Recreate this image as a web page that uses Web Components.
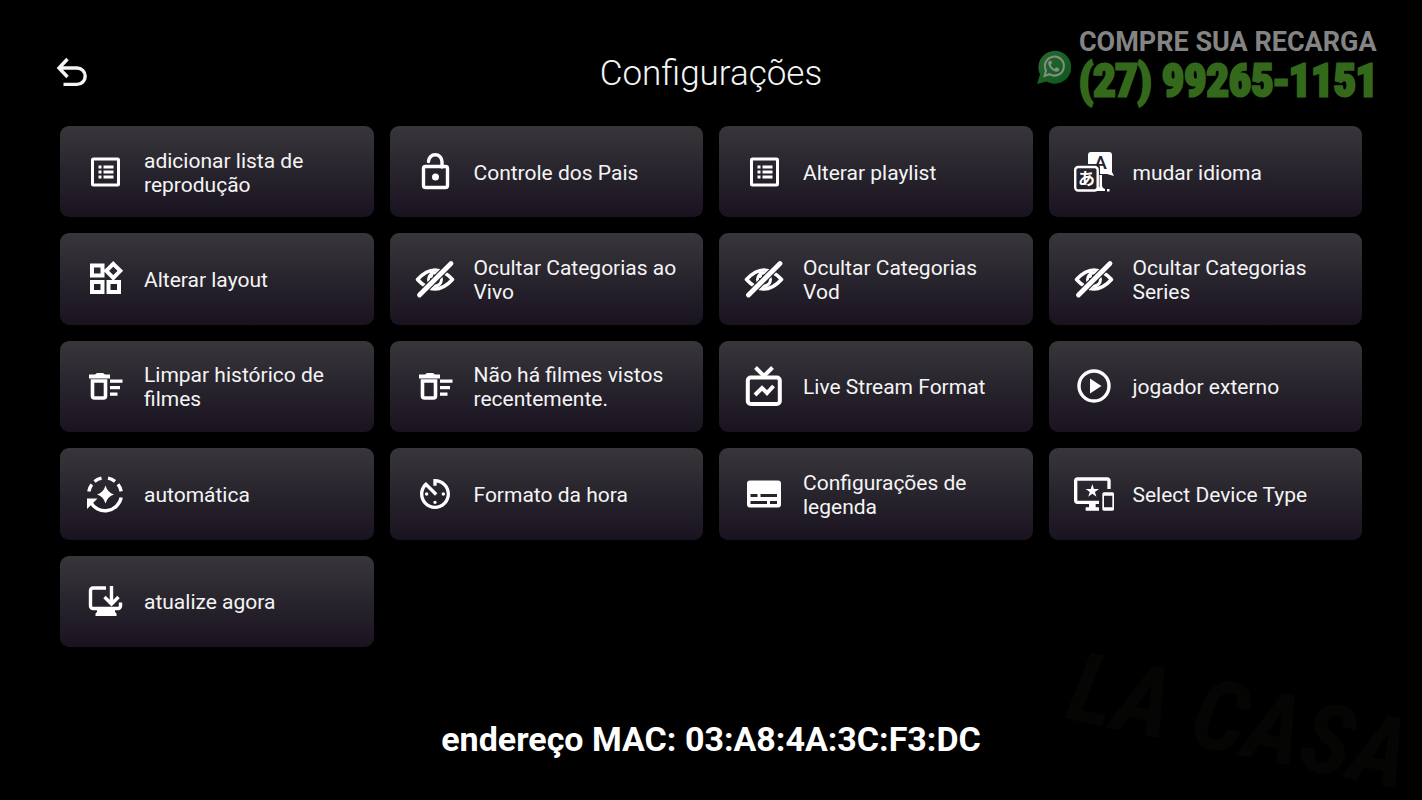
<!DOCTYPE html>
<html lang="pt-BR">
<head>
<meta charset="utf-8">
<meta name="viewport" content="width=device-width, initial-scale=1">
<title>Configurações</title>
<style>
    body {
        margin: 0;
        background: #000;
        color: #f4f4f5;
        font-family: Roboto, "Liberation Sans", sans-serif;
    }
</style>
</head>
<body>

<settings-screen>
    <back-button slot="header"></back-button>
    <span slot="title">Configurações</span>
    <recharge-banner slot="banner" phone="(27) 99265-1151">COMPRE SUA RECARGA</recharge-banner>

    <settings-tile icon="list">adicionar lista de reprodução</settings-tile>
    <settings-tile icon="lock">Controle dos Pais</settings-tile>
    <settings-tile icon="list">Alterar playlist</settings-tile>
    <settings-tile icon="translate">mudar idioma</settings-tile>
    <settings-tile icon="layout">Alterar layout</settings-tile>
    <settings-tile icon="hide">Ocultar Categorias ao Vivo</settings-tile>
    <settings-tile icon="hide">Ocultar Categorias Vod</settings-tile>
    <settings-tile icon="hide">Ocultar Categorias Series</settings-tile>
    <settings-tile icon="clear">Limpar histórico de filmes</settings-tile>
    <settings-tile icon="clear">Não há filmes vistos recentemente.</settings-tile>
    <settings-tile icon="tv">Live Stream Format</settings-tile>
    <settings-tile icon="play">jogador externo</settings-tile>
    <settings-tile icon="auto">automática</settings-tile>
    <settings-tile icon="timer">Formato da hora</settings-tile>
    <settings-tile icon="subtitles">Configurações de legenda</settings-tile>
    <settings-tile icon="devices">Select Device Type</settings-tile>
    <settings-tile icon="update">atualize agora</settings-tile>

    <span slot="footer">endereço MAC: 03:A8:4A:3C:F3:DC</span>
</settings-screen>

<script>
(function(){
    function attach(el, html) {
        const template = document.createElement('template');
        template.innerHTML = html;
        const shadowRoot = el.attachShadow({mode: 'open'});
        shadowRoot.appendChild(template.content.cloneNode(true));
        return shadowRoot;
    }

    // All icons share a 40 x 40 box
    const icons = {
        list: `
            <rect x="7.5" y="7" width="26" height="26" rx="1" fill="none" stroke="currentColor" stroke-width="3"/>
            <path d="M13.5 13.5h3v3h-3zM18.5 13.5h10v3h-10zM13.5 18.5h3v3h-3zM18.5 18.5h10v3h-10zM13.5 23.5h3v3h-3zM18.5 23.5h10v3h-10z"/>`,
        lock: `
            <g fill="none" stroke="currentColor" stroke-width="3.4">
                <rect x="8.5" y="14.5" width="24" height="21" rx="2"/>
                <path d="M13.5 9.5a6.5 6.5 0 0 1 13.5 0V15" stroke-linecap="round"/>
            </g>
            <circle cx="20.5" cy="25" r="3.5"/>`,
        translate: `
            <path d="M17 0h18a3 3 0 0 1 3 3v17l2 4-7-2H26v-6a4 4 0 0 0-4-4h-8V3a3 3 0 0 1 3-3z"/>
            <text x="26.5" y="16.5" font-family="Roboto, sans-serif" font-weight="500" font-size="19" text-anchor="middle" fill="#25212b">A</text>
            <rect x="1.2" y="15" width="22.5" height="23.5" rx="3" fill="none" stroke="currentColor" stroke-width="2.4"/>
            <text x="12.5" y="33" font-family="'Noto Sans CJK JP', sans-serif" font-weight="700" font-size="17" text-anchor="middle">あ</text>
            <path d="M25.5 23H28v10q0 3 3 4v2H21v-2l4.5-2zM33 37h2.5v2.5H33z"/>`,
        layout: `
            <g fill="none" stroke="currentColor" stroke-width="4">
                <path d="M7 6.5h10.5v10H7zM7 23h10.5v10H7zM23.5 23H34v10H23.5zM28.3 4.8l7 7-7 7-7-7z"/>
            </g>`,
        hide: `
            <g fill="none" stroke="currentColor">
                <path d="M2.5 20.5Q20 1.5 37.5 20.5Q20 39.5 2.5 20.5z" stroke-width="3.6" stroke-linejoin="round"/>
                <circle cx="20" cy="20.5" r="6.5" stroke-width="3"/>
                <path d="M16.5 12v7" stroke-width="3"/>
                <path d="M2.5 34L34 2.5M6.5 38L38 6.5" stroke="#25212b" stroke-width="1.5"/>
                <path d="M4.5 36L36 4.5" stroke-width="4.8" stroke-linecap="round"/>
            </g>`,
        clear: `
            <path d="M4 8.5h6L12 7h6l2 1.5h5v4H4z"/>
            <path d="M7.5 15h13v15a2 2 0 0 1-2 2h-9a2 2 0 0 1-2-2z" fill="none" stroke="currentColor" stroke-width="3.6"/>
            <path d="M25 13.5h12.5v3.3H25zM25 20h10v3.3H25zM25 26.5h7.5v3.3H25z"/>`,
        tv: `
            <g fill="none" stroke="currentColor" stroke-width="4">
                <rect x="3.8" y="11.5" width="32" height="26.5" rx="3"/>
                <path d="M11.5 1.5L20 10l8.5-8.5"/>
                <path d="M11 29l7-7 5 5 6.5-7"/>
            </g>`,
        play: `
            <circle cx="20" cy="20" r="15" fill="none" stroke="currentColor" stroke-width="3.4"/>
            <path d="M16 12.5L27.5 20 16 27.5z"/>`,
        auto: `
            <g fill="none" stroke="currentColor" stroke-width="3.4">
                <path d="M3.8 17.5a16.5 16.5 0 0 1 3-7M9.5 7.5a16.5 16.5 0 0 1 7-3.3M23 4.1a16.5 16.5 0 0 1 7 3.2M33 10.3a16.5 16.5 0 0 1 3.2 7"/>
                <path d="M5.5 28a16.5 16.5 0 0 0 30.7-4.5"/>
            </g>
            <path d="M2 24.5h10.5L9 28l-3.5 3.5L2 35z"/>
            <path d="M20.5 11.5q2 7 8.5 9-6.500 2-8.5 9-2-7-8.500-9 6.500-2 8.500-9z"/>`,
        timer: `
            <path transform="scale(1.667)" d="M11 17c0 .55.45 1 1 1s1-.45 1-1-.45-1-1-1-1 .45-1 1zm0-14v4h2V5.08c3.39.49 6 3.39 6 6.92 0 3.87-3.13 7-7 7s-7-3.13-7-7c0-1.68.59-3.22 1.58-4.42L12 13l1.41-1.41-6.8-6.8v.02C4.42 6.45 3 9.05 3 12c0 4.97 4.02 9 9 9 4.97 0 9-4.03 9-9s-4.03-9-9-9h-1zm7 9c0-.55-.45-1-1-1s-1 .45-1 1 .45 1 1 1 1-.45 1-1zM6 12c0 .55.45 1 1 1s1-.45 1-1-.45-1-1-1-1 .45-1 1z"/>`,
        subtitles: `
            <path fill-rule="evenodd" d="M6 6.5h28a3 3 0 0 1 3 3v21a3 3 0 0 1-3 3H6a3 3 0 0 1-3-3v-21a3 3 0 0 1 3-3zM6.5 20v3h7v-3zM16.5 20v3H33v-3zM6.5 27v3H23v-3zM26 27v3h7v-3z"/>`,
        devices: `
            <path transform="scale(1.667)" d="M23 11.01L18 11c-.55 0-1 .45-1 1v9c0 .55.45 1 1 1h5c.55 0 1-.45 1-1v-9c0-.55-.45-.99-1-.99zM23 20h-5v-7h5v7zM20 2H2C.89 2 0 2.89 0 4v12c0 1.1.89 2 2 2h7v2H7v2h8v-2h-2v-2h2v-2H2V4h18v5h2V4c0-1.11-.9-2-2-2zm-8.03 7L11 6l-.97 3H7l2.47 1.76-.94 2.91 2.47-1.8 2.47 1.8-.94-2.91L15 9h-3.03z"/>`,
        update: `
            <g fill="none" stroke="currentColor" stroke-width="3.4">
                <path d="M21 7H8a2.5 2.5 0 0 0-2.5 2.5V25A2.5 2.5 0 0 0 8 27.5h25a2.5 2.5 0 0 0 2.5-2.5v-3.5"/>
                <path d="M26.5 5v18M19.5 16l7 7 7-7"/>
            </g>
            <path d="M12 28h18v3l1.5 1.5V35h-21v-2.5L12 31z"/>`
    };

    class SettingsScreen extends HTMLElement {
        constructor() {
            super();
            attach(this, `
                <style>
                    :host {
                        box-sizing: border-box;
                        display: flex;
                        flex-direction: column;
                        min-height: 100vh;
                        overflow: hidden;
                        position: relative;
                    }
                    .backdrop {
                        bottom: 0;
                        height: 180px;
                        overflow: visible;
                        position: absolute;
                        right: 0;
                        width: 370px;
                    }
                    header {
                        align-items: center;
                        box-sizing: border-box;
                        display: grid;
                        grid-template-columns: 1fr auto 1fr;
                        min-height: 126px;
                        padding: 0 44px;
                    }
                    h1 {
                        font-size: 35px;
                        font-weight: 300;
                        line-height: 44px;
                        margin: 0;
                        padding-top: 22px;
                    }
                    main {
                        display: grid;
                        flex: 1;
                        gap: 16px;
                        grid-auto-rows: 1fr;
                        grid-template-columns: repeat(4, 1fr);
                        padding: 0 60px;
                        position: relative;
                    }
                    footer {
                        box-sizing: border-box;
                        color: #fff;
                        font-size: 34px;
                        font-weight: 700;
                        line-height: 40px;
                        padding: 72px 20px 41px;
                        position: relative;
                        text-align: center;
                    }
                </style>
                <svg class="backdrop" viewBox="0 0 370 180" aria-hidden="true">
                    <text x="12" y="98" transform="rotate(12 12 98)" fill="#050504"
                        font-family="'Roboto Condensed', 'Liberation Sans Narrow', sans-serif"
                        font-size="98" font-weight="700" font-style="italic">LA CASA</text>
                </svg>
                <header>
                    <slot name="header"></slot>
                    <h1><slot name="title"></slot></h1>
                    <slot name="banner"></slot>
                </header>
                <main><slot></slot></main>
                <footer><slot name="footer"></slot></footer>
            `);
        }
    }

    class BackButton extends HTMLElement {
        constructor() {
            super();
            attach(this, `
                <style>
                    :host {
                        display: block;
                        padding: 20px 0 0 8px;
                    }
                    button {
                        background: none;
                        border: 0;
                        color: inherit;
                        cursor: pointer;
                        display: block;
                        padding: 0;
                    }
                    svg {
                        display: block;
                        height: 40px;
                        width: 40px;
                    }
                </style>
                <button type="button" aria-label="Voltar">
                    <svg viewBox="0 0 40 40" fill="none" stroke="currentColor" stroke-width="3.4">
                        <path d="M15.5 6L7 15l8.5 9M7 15h18a8.200 8.200 0 0 1 0 16.400H11.500"/>
                    </svg>
                </button>
            `);
        }
    }

    class RechargeBanner extends HTMLElement {
        constructor() {
            super();
            const root = attach(this, `
                <style>
                    :host {
                        display: block;
                        justify-self: end;
                        padding-top: 8px;
                    }
                    a {
                        align-items: center;
                        color: #848484;
                        display: flex;
                        gap: 8px;
                        text-decoration: none;
                    }
                    svg {
                        height: 36px;
                        width: 36px;
                    }
                    .title, .phone {
                        display: block;
                        white-space: nowrap;
                    }
                    .title {
                        font-size: 27px;
                        font-weight: 700;
                        line-height: 28px;
                    }
                    .phone {
                        -webkit-text-stroke: 3px #34691c;
                        color: #34691c;
                        font-family: "Liberation Sans Narrow", "Roboto Condensed", "Liberation Sans", sans-serif;
                        font-size: 44px;
                        font-weight: 700;
                        line-height: 50px;
                    }
                </style>
                <a>
                    <svg viewBox="0 0 36 36" aria-hidden="true">
                        <defs>
                            <linearGradient id="bubble" x2="1" y2="1">
                                <stop offset="0" stop-color="#2a6a32"/>
                                <stop offset="1" stop-color="#0a5717"/>
                            </linearGradient>
                        </defs>
                        <path d="M2 35l3-9.5A16.5 16.5 0 1 1 11.5 32.5z" fill="url(#bubble)"/>
                        <path d="M9.5 27l1.5-5.5a9.5 9.5 0 1 1 3.5 3.7z" fill="none" stroke="#858b85" stroke-width="2"/>
                        <path d="M15.5 11.5c-1.5 0-2.5 1.5-2.3 3 .6 4 4 7.5 8 8.2 1.5.2 3.3-1 3.3-2.5 0-.7-2.5-2-3.2-2-.6 0-1 1.5-1.7 1.5-1.5-.3-3.6-2.5-3.8-3.8 0-.5 1.2-1 1.1-1.6-.1-.8-.8-2.8-1.400-2.800z" fill="#858b85"/>
                    </svg>
                    <span>
                        <span class="title"><slot></slot></span>
                        <span class="phone"></span>
                    </span>
                </a>
            `);
            const phone = this.getAttribute('phone');
            root.querySelector('.phone').textContent = phone;
            root.querySelector('a').href = 'tel:' + phone.replace(/\D/g, '');
        }
    }

    class SettingsTile extends HTMLElement {
        constructor() {
            super();
            const root = attach(this, `
                <style>
                    :host {
                        display: flex;
                        min-width: 0;
                    }
                    button {
                        align-items: center;
                        background: linear-gradient(#38363a, #28242d 50%, #191320);
                        border: 0;
                        border-radius: 9px;
                        color: inherit;
                        cursor: pointer;
                        display: flex;
                        flex: 1;
                        font: inherit;
                        font-size: 21px;
                        gap: 19px;
                        line-height: 24px;
                        min-width: 0;
                        padding: 12px 25px;
                        text-align: left;
                    }
                    button:focus-visible {
                        outline: 2px solid #fff;
                    }
                    svg {
                        color: #fff;
                        fill: currentColor;
                        flex: none;
                        height: 40px;
                        width: 40px;
                    }
                    span {
                        padding-top: 2px;
                    }
                </style>
                <button type="button">
                    <svg viewBox="0 0 40 40" aria-hidden="true"></svg>
                    <span><slot></slot></span>
                </button>
            `);
            root.querySelector('svg').innerHTML = icons[this.getAttribute('icon')];
        }
    }

    window.customElements.define('settings-screen', SettingsScreen);
    window.customElements.define('back-button', BackButton);
    window.customElements.define('recharge-banner', RechargeBanner);
    window.customElements.define('settings-tile', SettingsTile);
})();
</script>
</body>
</html>
